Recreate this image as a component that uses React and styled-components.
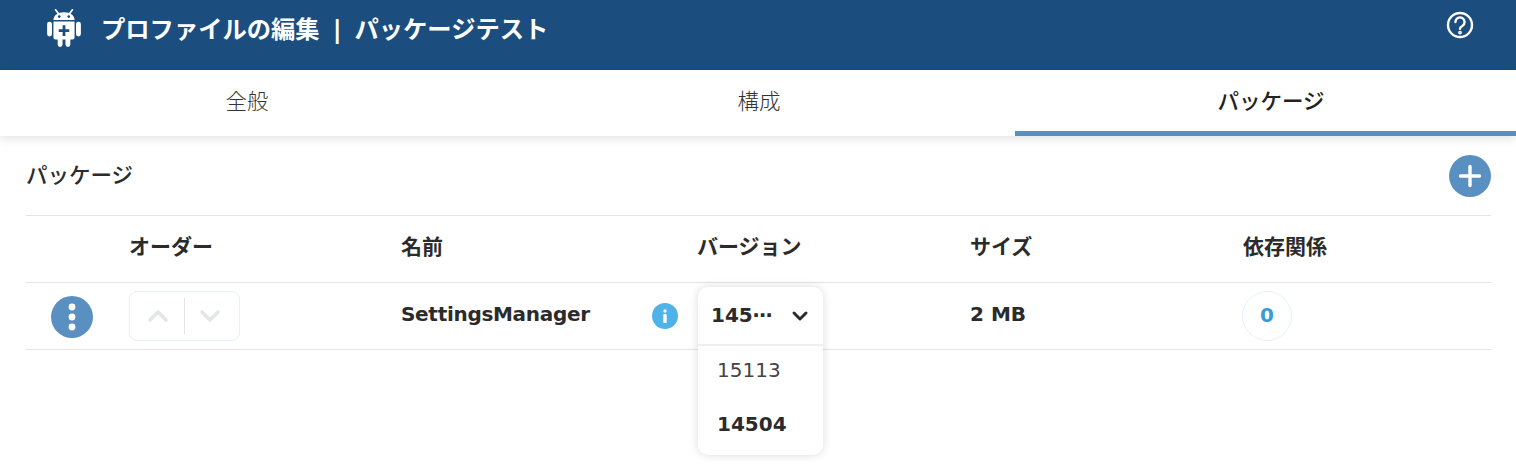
import styled, { createGlobalStyle } from "styled-components";
import { ChevronUp, ChevronDown } from "lucide-react";

const GlobalStyle = createGlobalStyle`
  html, body {
    margin: 0;
    background: #fff;
    font-family: "DejaVu Sans", "Noto Sans CJK JP", sans-serif;
    color: #2b2b2b;
    overflow: hidden;
  }
`;

const Page = styled.div`
  width: 1516px;
  height: 469px;
  position: relative;
`;

const Header = styled.header`
  height: 70px;
  background: #1b4d7e;
  display: flex;
  justify-content: space-between;
  padding: 9px 44px 0 47px;
  box-sizing: border-box;
  color: #fff;
`;

const TitleWrap = styled.div`
  display: flex;
  align-items: flex-start;
  gap: 20px;
`;

const Title = styled.h1`
  margin: 4px 0 0;
  font-size: 24.3px;
  line-height: 33px;
  font-weight: 700;
  word-spacing: 4.5px;
`;

const HelpIcon = styled.svg`
  width: 28px;
  height: 28px;
  margin: 2px -2px 0 0;
`;

const Tabs = styled.nav`
  height: 66px;
  display: grid;
  grid-template-columns: 494px 521px 501px;
  box-shadow: 0 2px 10px rgba(0, 0, 0, 0.13);
  position: relative;
`;

const Tab = styled.div`
  display: flex;
  align-items: center;
  justify-content: center;
  font-size: 21.5px;
  line-height: 30px;
  box-sizing: border-box;
  padding: 3px 0 0 ${(p) => p.$shift || 0}px;
  color: ${(p) => (p.$active ? "#222" : "#333")};
  font-weight: ${(p) => (p.$active ? 500 : 300)};
  border-bottom: 5px solid ${(p) => (p.$active ? "#5a90c1" : "transparent")};
`;

const Content = styled.main`
  padding: 19px 25px 0 26px;
`;

const SectionHead = styled.div`
  height: 60px;
  display: flex;
  justify-content: space-between;
  align-items: flex-start;
  border-bottom: 1px solid #e4e4e4;
`;

const SectionTitle = styled.h2`
  margin: 5px 0 0;
  font-size: 21.5px;
  line-height: 32px;
  font-weight: 500;
`;

const RoundButton = styled.button`
  width: 42px;
  height: 42px;
  border: 0;
  padding: 0;
  border-radius: 50%;
  background: #5a90c1;
  display: flex;
  align-items: center;
  justify-content: center;
`;

const Grid = styled.div`
  display: grid;
  grid-template-columns: 103px 272px 296px 273px 273px 1fr;
  align-items: center;
  box-sizing: border-box;
  border-bottom: 1px solid #e4e4e4;
  height: 67px;
`;

const HeadCell = styled.div`
  font-size: 21px;
  line-height: 30px;
  font-weight: 700;
  padding-bottom: 4px;
`;

const Cell = styled.div`
  font-size: 20px;
  line-height: 28px;
  font-weight: 700;
  display: flex;
  align-items: center;
`;

const TextCell = styled(Cell)`
  padding-bottom: 4px;
`;

const MenuCell = styled(Cell)`
  padding: 2px 0 0 25px;
`;

const OrderBox = styled.div`
  width: 111px;
  height: 50px;
  box-sizing: border-box;
  border: 1px solid #e3f1f9;
  border-radius: 8px;
  display: grid;
  grid-template-columns: 56px 48px;
  align-items: center;
  justify-items: center;
  color: #e3e5e6;
  position: relative;
`;

const OrderDivider = styled.span`
  position: absolute;
  left: 54px;
  top: 6px;
  bottom: 6px;
  width: 1px;
  background: #e4e4e4;
`;

const NameCell = styled(TextCell)`
  justify-content: space-between;
  padding-right: 19px;
  letter-spacing: -0.3px;
`;

const InfoBadge = styled.span`
  width: 26px;
  height: 26px;
  border-radius: 50%;
  background: #4fb3ea;
  display: flex;
  align-items: center;
  justify-content: center;
  margin-top: 4px;
`;

const CountBadge = styled.span`
  width: 50px;
  height: 50px;
  margin-left: -1px;
  padding-bottom: 2px;
  box-sizing: border-box;
  border: 1px solid #e3f1f9;
  border-radius: 50%;
  display: flex;
  align-items: center;
  justify-content: center;
  color: #3b9bd6;
  font-size: 20px;
`;

const Dropdown = styled.div`
  position: absolute;
  left: 698px;
  top: 287px;
  width: 125px;
  height: 168px;
  background: #fff;
  border-radius: 10px;
  box-shadow: 0 0 10px rgba(0, 0, 0, 0.14);
`;

const Selected = styled.div`
  height: 59px;
  box-sizing: border-box;
  border-bottom: 2px solid #ecf0f1;
  display: flex;
  align-items: center;
  justify-content: space-between;
  padding: 0 11px 0 13px;
  font-size: 20px;
  line-height: 28px;
  font-weight: 700;
`;

const SelectedText = styled.span`
  padding-bottom: 2px;
`;

const Option = styled.div`
  height: 54px;
  box-sizing: border-box;
  padding: 0 0 6px 19px;
  display: flex;
  align-items: center;
  font-size: 20px;
  line-height: 28px;
  font-weight: ${(p) => (p.$bold ? 700 : 400)};
  color: ${(p) => (p.$bold ? "#2b2b2b" : "#444")};
`;

const AndroidIcon = () => (
  <svg width="34" height="38" viewBox="0 0 32 36" fill="#fff">
    <path d="M8 .8l3 4M24 .8l-3 4" stroke="#fff" strokeWidth="1.6" strokeLinecap="round" />
    <path d="M6 10.5C6 6 10 3 16 3s10 3 10 7.5z" />
    <circle cx="11.5" cy="7.2" r="1.3" fill="#1b4d7e" />
    <circle cx="20.5" cy="7.2" r="1.3" fill="#1b4d7e" />
    <rect x="0" y="12" width="4.6" height="14" rx="2.3" />
    <rect x="27.4" y="12" width="4.6" height="14" rx="2.3" />
    <path d="M6 11.8h20V27a2 2 0 0 1-2 2h-2v4.7a2.3 2.3 0 0 1-4.6 0V29h-2.8v4.7a2.3 2.3 0 0 1-4.6 0V29H8a2 2 0 0 1-2-2z" />
    <path d="M16 15.5v10M11 20.5h10" stroke="#1b4d7e" strokeWidth="2.6" />
  </svg>
);

export default function App() {
  return (
    <Page>
      <GlobalStyle />
      <Header>
        <TitleWrap>
          <AndroidIcon />
          <Title>プロファイルの編集 | パッケージテスト</Title>
        </TitleWrap>
        <HelpIcon viewBox="0 0 28 28" fill="none" stroke="#fff" strokeWidth="2.4" strokeLinecap="round">
          <circle cx="14" cy="14" r="12" />
          <path d="M9.4 11a4.6 4.6 0 1 1 6.9 4c-1.5.8-2.3 1.3-2.3 2.8" />
          <circle cx="14" cy="21.6" r="0.7" fill="#fff" />
        </HelpIcon>
      </Header>
      <Tabs>
        <Tab>全般</Tab>
        <Tab $shift={9}>構成</Tab>
        <Tab $active $shift={11}>パッケージ</Tab>
      </Tabs>
      <Content>
        <SectionHead>
          <SectionTitle>パッケージ</SectionTitle>
          <RoundButton>
            <svg width="24" height="24" viewBox="0 0 24 24" stroke="#fff" strokeWidth="3.4" strokeLinecap="round">
              <path d="M12 2.5v19M2.5 12h19" />
            </svg>
          </RoundButton>
        </SectionHead>
        <Grid>
          <span />
          <HeadCell>オーダー</HeadCell>
          <HeadCell>名前</HeadCell>
          <HeadCell>バージョン</HeadCell>
          <HeadCell>サイズ</HeadCell>
          <HeadCell>依存関係</HeadCell>
        </Grid>
        <Grid>
          <MenuCell>
            <RoundButton>
              <svg width="8" height="30" viewBox="0 0 8 30" fill="#fff">
                <circle cx="4" cy="5" r="3.4" />
                <circle cx="4" cy="15" r="3.4" />
                <circle cx="4" cy="25" r="3.4" />
              </svg>
            </RoundButton>
          </MenuCell>
          <Cell>
            <OrderBox>
              <ChevronUp size={32} strokeWidth={2.6} />
              <OrderDivider />
              <ChevronDown size={32} strokeWidth={2.6} />
            </OrderBox>
          </Cell>
          <NameCell>
            SettingsManager
            <InfoBadge>
              <svg width="6" height="14" viewBox="0 0 6 14" fill="#fff">
                <circle cx="3" cy="2" r="1.7" />
                <rect x="1.3" y="5" width="3.4" height="9" rx="0.8" />
              </svg>
            </InfoBadge>
          </NameCell>
          <span />
          <TextCell>2 MB</TextCell>
          <Cell>
            <CountBadge>0</CountBadge>
          </Cell>
        </Grid>
      </Content>
      <Dropdown>
        <Selected>
          <SelectedText>145⋯</SelectedText>
          <ChevronDown size={24} strokeWidth={3} />
        </Selected>
        <Option>15113</Option>
        <Option $bold>14504</Option>
      </Dropdown>
    </Page>
  );
}
